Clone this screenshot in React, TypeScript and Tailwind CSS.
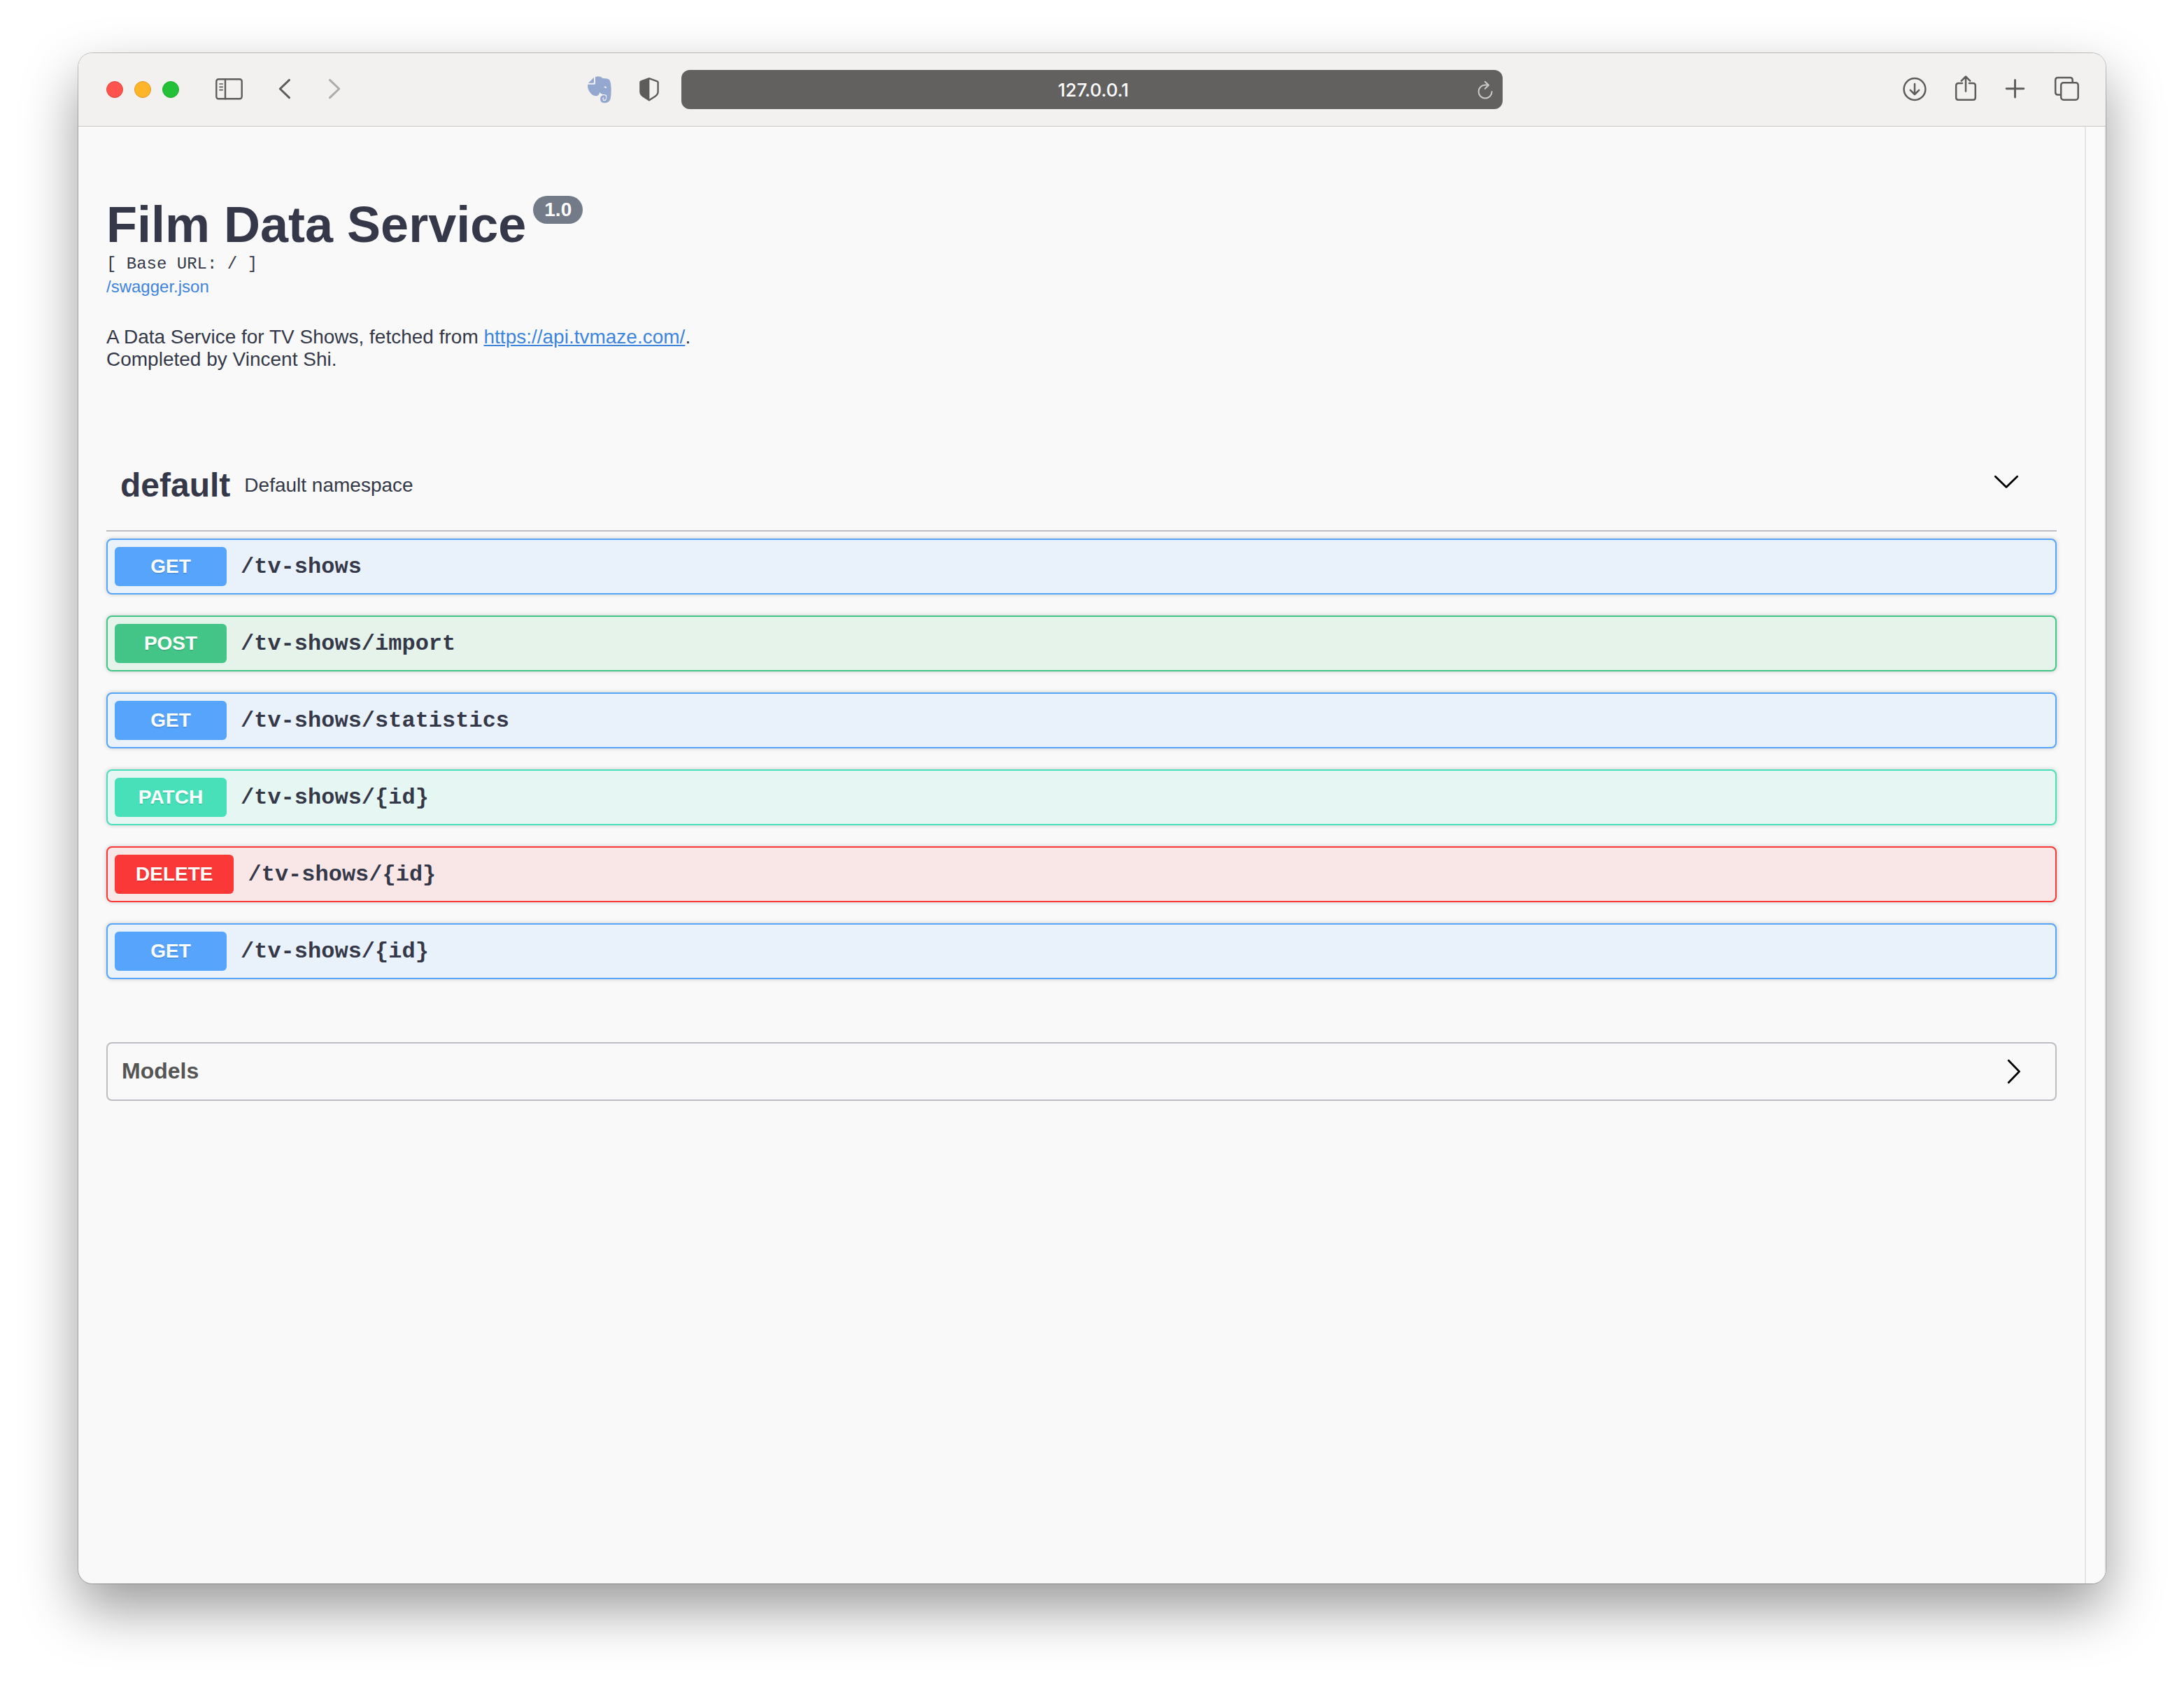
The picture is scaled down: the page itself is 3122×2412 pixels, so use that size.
import type { ReactNode } from "react";

type Operation = { method: string; path: string; box: string; badge: string };

const GET_BOX = "border-[#56a4fc] bg-[#e9f1fb]";
const GET_BADGE = "bg-[#56a4fc]";

const operations: Operation[] = [
  { method: "GET", path: "/tv-shows", box: GET_BOX, badge: GET_BADGE },
  { method: "POST", path: "/tv-shows/import", box: "border-[#42c586] bg-[#e6f3eb]", badge: "bg-[#42c586]" },
  { method: "GET", path: "/tv-shows/statistics", box: GET_BOX, badge: GET_BADGE },
  { method: "PATCH", path: "/tv-shows/{id}", box: "border-[#48e0b9] bg-[#e6f6f2]", badge: "bg-[#48e0b9]" },
  { method: "DELETE", path: "/tv-shows/{id}", box: "border-[#fa3837] bg-[#f9e6e6]", badge: "bg-[#fa3837]" },
  { method: "GET", path: "/tv-shows/{id}", box: GET_BOX, badge: GET_BADGE },
];

function ToolButton({ label, className = "", children }: { label: string; className?: string; children: ReactNode }) {
  return (
    <button type="button" aria-label={label} className={`flex h-10 shrink-0 items-center justify-center ${className}`}>
      {children}
    </button>
  );
}

function Toolbar() {
  return (
    <header className="grid h-[105px] grid-cols-[1fr_minmax(0,1174px)_1fr] items-center border-b border-[#c9c8c7] bg-[#f3f1ef] text-[#5d5c5a]">
      <div className="flex items-center justify-between pl-10 pr-8">
        <div className="flex items-center">
          <div className="flex gap-4">
            <button type="button" aria-label="Close" className="size-6 rounded-full border border-[#e0443f] bg-[#ff544d]" />
            <button type="button" aria-label="Minimize" className="size-6 rounded-full border border-[#dd9a24] bg-[#ffb429]" />
            <button type="button" aria-label="Zoom" className="size-6 rounded-full border border-[#1fae2c] bg-[#24c138]" />
          </div>
          <ToolButton label="Show sidebar" className="ml-[52px] w-10">
            <svg width="40" height="40" viewBox="0 0 40 40" fill="none" stroke="currentColor" strokeWidth="2.4" strokeLinecap="round">
              <rect x="1.3" y="5.2" width="36.4" height="28" rx="3" />
              <path d="M14 5.2v28" />
              <path d="M6 12h4.2M6 16.3h4.2M6 20.6h4.2" strokeWidth="1.7" />
            </svg>
          </ToolButton>
          <ToolButton label="Back" className="ml-[46px] w-7">
            <svg width="28" height="40" viewBox="0 0 28 40" fill="none" stroke="currentColor" strokeWidth="3" strokeLinecap="round" strokeLinejoin="round">
              <path d="M19.5 6.3 6.3 19l13.2 12.7" />
            </svg>
          </ToolButton>
          <ToolButton label="Forward" className="ml-[42px] w-7 text-[#adacaa]">
            <svg width="28" height="40" viewBox="0 0 28 40" fill="none" stroke="currentColor" strokeWidth="3" strokeLinecap="round" strokeLinejoin="round">
              <path d="M7.5 6.3 20.7 19 7.5 31.7" />
            </svg>
          </ToolButton>
        </div>
        <div className="flex items-center gap-10">
          <ToolButton label="Evernote Web Clipper" className="text-[#94a7cf]">
            <svg width="34" height="39" viewBox="120 86 102 117" fill="currentColor">
              <path
                fillRule="evenodd"
                d="M153 89Q165 84 178 89 181 94 186 95 208 95 213 101 220 110 221 140 221 178 216 188 208 201 192 201 174 200 174 183 175 168 190 167 199 169 199 178 198 187 190 187 186 185 189 181 191 177 187 177 184 178 184 184 186 193 194 192 202 190 202 170 201 164 190 164 175 162 172 154 170 170 155 171 135 168 124 145 119 135 121 121H149Q153 121 153 117ZM190 134Q191 129 196 129 201 130 202 138 196 135 190 134Z"
              />
              <path d="M123 115 147 91V112Q147 115 144 115Z" />
            </svg>
          </ToolButton>
          <ToolButton label="Privacy report">
            <svg width="28" height="40" viewBox="0 0 28 40" fill="none" stroke="currentColor">
              <path d="M14 4.2 25.7 8.4q.9.4.9 1.4v13.4q0 2.4-1.6 4.2-1.4 1.7-3.6 3.2L14 35.2 6.6 30.6Q4.4 29.1 3 27.4 1.4 25.6 1.4 23.2V9.8q0-1 .9-1.4Z" strokeWidth="2.4" strokeLinejoin="round" />
              <path d="M14.4 4v31.5L6.6 30.6Q4.4 29.1 3 27.4 1.4 25.6 1.4 23.2V9.8q0-1 .9-1.4Z" fill="currentColor" stroke="none" />
            </svg>
          </ToolButton>
        </div>
      </div>

      <div className="flex h-14 items-center rounded-xl bg-[#62615f] pl-[42px] pr-3 text-white">
        <input
          type="text"
          aria-label="Address"
          defaultValue="127.0.0.1"
          className="min-w-0 flex-1 bg-transparent pt-0.5 text-center font-['Inter',sans-serif] text-[26px] leading-8 font-medium outline-none"
        />
        <button type="button" aria-label="Reload" className="flex h-8 w-[26px] items-center justify-center text-[#cbcac9]">
          <svg width="26" height="32" viewBox="0 0 26 32" fill="none" stroke="currentColor" strokeWidth="2" strokeLinecap="round" strokeLinejoin="round">
            <path d="M22.6 19a9.5 9.5 0 1 1-9.5-9.5h4.5" />
            <path d="M12.8 4.8 18 9.8l-5.2 5" />
          </svg>
        </button>
      </div>

      <div className="flex items-center justify-end gap-10 pr-9">
        <ToolButton label="Downloads">
          <svg width="34" height="40" viewBox="0 0 34 40" fill="none" stroke="currentColor" strokeWidth="2.5" strokeLinecap="round" strokeLinejoin="round">
            <circle cx="17" cy="19.5" r="15.4" />
            <path d="M17 12v14.5M10.8 20.8 17 27l6.2-6.2" />
          </svg>
        </ToolButton>
        <ToolButton label="Share">
          <svg width="32" height="40" viewBox="0 0 32 40" fill="none" stroke="currentColor" strokeWidth="2.5" strokeLinecap="round" strokeLinejoin="round">
            <path d="M11 11H5.5Q2.200 11 2.200 14.300v17.200q0 3.300 3.300 3.300h21q3.300 0 3.300-3.300V14.300Q29.800 11 26.500 11H21" />
            <path d="M16 22.500V1.500M9.800 7.600 16 1.500l6.200 6.100" />
          </svg>
        </ToolButton>
        <ToolButton label="New tab" className="-ml-0.5">
          <svg width="32" height="40" viewBox="0 0 32 40" fill="none" stroke="currentColor" strokeWidth="2.9" strokeLinecap="round">
            <path d="M16.500 6.500v24.500M4.200 18.700h24.600" />
          </svg>
        </ToolButton>
        <ToolButton label="Show all tabs">
          <svg width="38" height="40" viewBox="0 0 38 40" fill="none" stroke="currentColor" strokeWidth="2.5" strokeLinejoin="round">
            <path d="M9 27.500H5.700Q2.200 27.500 2.200 24V6.500Q2.200 3 5.700 3h17.500q3.500 0 3.500 3.500V10" />
            <rect x="10.2" y="10.2" width="24.5" height="24.5" rx="3.5" />
          </svg>
        </ToolButton>
      </div>
    </header>
  );
}

function OperationRow({ method, path, box, badge }: Operation) {
  return (
    <button
      type="button"
      className={`flex h-20 w-full items-center rounded-lg border-2 px-[10px] text-left shadow-[0_0_6px_rgba(0,0,0,0.19)] ${box}`}
    >
      <span
        className={`flex h-14 min-w-40 items-center justify-center rounded-md px-[30px] text-[28px] leading-8 font-bold text-white [text-shadow:0_2px_0_rgba(0,0,0,0.1)] ${badge}`}
      >
        {method}
      </span>
      <span className="px-5 pt-0.5 font-['Liberation_Mono',monospace] text-[32px] leading-9 font-bold">{path}</span>
    </button>
  );
}

export default function App() {
  return (
    <div className="flex min-h-screen flex-col bg-white px-28 pt-19 pb-37 font-['Liberation_Sans',Arial,sans-serif] text-[#343848]">
      <div className="flex flex-1 flex-col overflow-hidden rounded-[20px] bg-[#f9f9f9] shadow-[0_0_0_1px_rgba(0,0,0,0.22),0_36px_80px_rgba(0,0,0,0.4)]">
        <Toolbar />
        <div className="flex flex-1">
          <main className="min-w-0 flex-1 px-10 pt-[99px]">
            <section>
              <div className="flex items-start gap-[10px]">
                <h1 className="text-[72px] leading-[82px] font-bold">Film Data Service</h1>
                <span className="flex h-10 items-center rounded-[20px] bg-[#737a88] px-4 text-[28px] leading-8 font-bold text-white">
                  1.0
                </span>
              </div>
              <p className="mt-0.5 font-['Liberation_Mono',monospace] text-2xl leading-7">[ Base URL: / ]</p>
              <a href="#swagger" className="mt-0.5 block w-fit text-2xl leading-8 text-[#3d84df]">
                /swagger.json
              </a>
              <p className="mt-10 text-[28px] leading-8">
                A Data Service for TV Shows, fetched from{" "}
                <a href="#tvmaze" className="text-[#3d84df] underline">
                  https://api.tvmaze.com/
                </a>
                .<br />
                Completed by Vincent Shi.
              </p>
            </section>

            <section className="mt-[104px]">
              <button type="button" className="flex h-[126px] w-full items-center border-b-2 border-[#bcbdc3] pb-1 pl-5 pr-[52px] text-left">
                <span className="text-5xl leading-[56px] font-bold">default</span>
                <span className="flex-1 px-5 text-[28px] leading-8">Default namespace</span>
                <svg width="40" height="40" viewBox="0 0 40 40" fill="none" stroke="#000" strokeWidth="2.8" strokeLinecap="round" strokeLinejoin="round">
                  <path d="M4.3 7.3 20 22.5 35.7 7.3" />
                </svg>
              </button>
              <div className="mt-[10px] flex flex-col gap-[30px]">
                {operations.map((op, i) => (
                  <OperationRow key={i} {...op} />
                ))}
              </div>
            </section>

            <button
              type="button"
              className="mt-[90px] flex h-[84px] w-full items-center justify-between rounded-lg border-2 border-[#bdbdc4] pl-5 pr-10 text-left text-[#555555]"
            >
              <span className="pb-0.5 text-[32px] leading-9 font-bold">Models</span>
              <svg width="40" height="40" viewBox="0 0 40 40" fill="none" stroke="#000" strokeWidth="2.8" strokeLinecap="round" strokeLinejoin="round">
                <path d="M13.3 4.3 28.5 20 13.3 35.7" />
              </svg>
            </button>
          </main>
          <div className="w-[30px] border-l-2 border-r-2 border-l-[#e4e4e4] border-r-[#f0f0f0] bg-[#fafafa]" />
        </div>
      </div>
    </div>
  );
}
